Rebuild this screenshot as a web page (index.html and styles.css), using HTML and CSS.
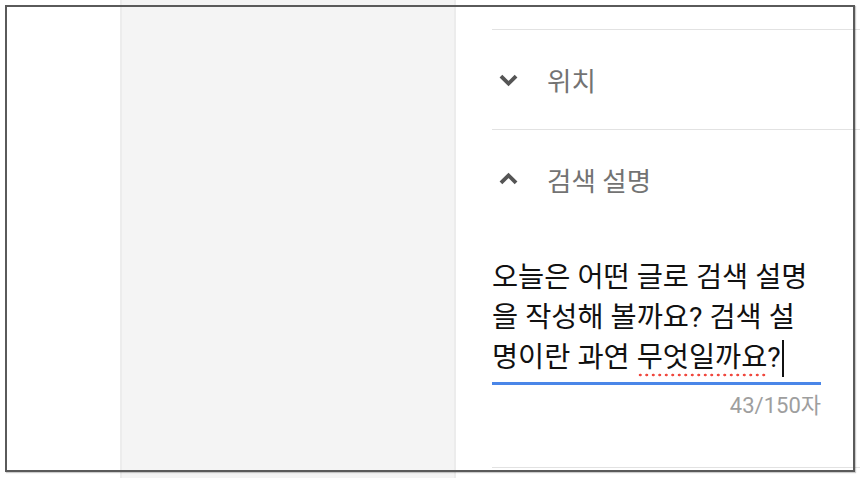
FILE: index.html
```html
<!DOCTYPE html>
<html lang="ko">
<head>
    <meta charset="UTF-8">
    <meta name="viewport" content="width=device-width, initial-scale=1.0">
    <title>검색 설명</title>
    <link rel="stylesheet" href="styles.css">
</head>
<body>

    <div class="page">
        <!-- 왼쪽 빈 영역 -->
        <aside class="nav"></aside>

        <!-- 미리보기 패널 -->
        <div class="preview"></div>

        <!-- 설정 패널 -->
        <main class="settings">
            <section class="section">
                <div class="section-head">
                    <svg class="chevron" viewBox="0 0 24 24"><polyline points="6.5,9.5 12,15 17.5,9.5"/></svg>
                    <span class="section-title">위치</span>
                </div>
            </section>

            <section class="section">
                <div class="section-head">
                    <svg class="chevron" viewBox="0 0 24 24"><polyline points="6.5,14.5 12,9 17.5,14.5"/></svg>
                    <span class="section-title">검색 설명</span>
                </div>
                <div class="section-body">
                    <div class="field">
                        <div class="field-text">오늘은 어떤 글로 검색 설명<br>을 작성해 볼까요? 검색 설<br>명이란 과연 <span class="typo">무엇일까요</span>?<span class="caret"></span></div>
                    </div>
                    <div class="counter">43/150자</div>
                </div>
            </section>

            <section class="section"></section>
        </main>
    </div>

    <!-- 강조 테두리 -->
    <div class="frame"></div>

</body>
</html>
```

FILE: styles.css
```css
/* Global Styles */
body {
    margin: 0;
    height: 100vh;
    overflow: hidden;
    background-color: #fff;
    font-family: Roboto, "Noto Sans CJK KR", sans-serif;
}

.page {
    display: flex;
    height: 100%;
}

.nav {
    width: 120px;
    flex-shrink: 0;
}

.preview {
    width: 332px;
    flex-shrink: 0;
    background-color: #f4f4f4;
    border-left: 2px solid #ececec;
    border-right: 2px solid #ececec;
}

/* Settings */
.settings {
    flex: 1;
    margin-left: 36px;
    padding-top: 29px;
}

.section {
    border-top: 1px solid #e2e2e2;
}

.section-head {
    display: flex;
    align-items: center;
    gap: 22px;
    height: 99px;
}

.chevron {
    width: 33px;
    height: 33px;
    fill: none;
    stroke: #555;
    stroke-width: 2.8;
}

.section-title {
    font-size: 26.5px;
    color: #737373;
}

.section-body {
    width: 329px;
    padding-top: 29px;
    padding-bottom: 47px;
}

.field {
    border-bottom: 3px solid #4a86e8;
    padding-bottom: 4px;
}

.field-text {
    font-size: 28.4px;
    line-height: 40px;
    color: #111;
    white-space: nowrap;
}

.typo {
    padding-bottom: 3px;
    background-image: radial-gradient(circle, #f0483e 1.1px, transparent 1.7px);
    background-size: 6.5px 4px;
    background-repeat: repeat-x;
    background-position: 0 100%;
}

.caret {
    display: inline-block;
    width: 2px;
    height: 37px;
    margin-left: 1px;
    background-color: #111;
    vertical-align: -10px;
}

.counter {
    margin-top: 7px;
    font-size: 22px;
    line-height: 28px;
    text-align: right;
    color: #9e9e9e;
}

/* Highlight frame */
.frame {
    position: absolute;
    left: 5px;
    top: 5px;
    width: 846px;
    height: 463px;
    border: 2px solid #5a5a5a;
    box-shadow: 1px 1px 1px rgba(0, 0, 0, 0.2);
}
```
